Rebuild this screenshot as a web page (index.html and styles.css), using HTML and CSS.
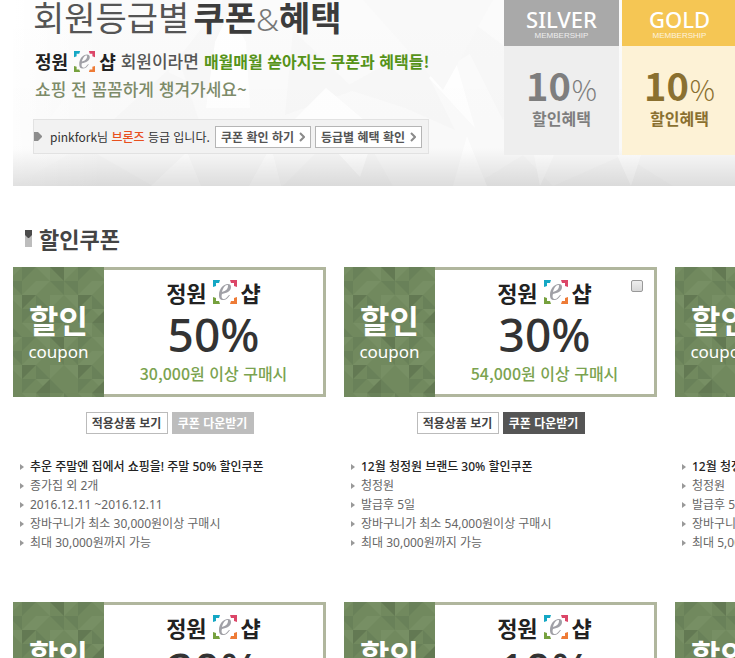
FILE: index.html
```html
<!DOCTYPE html>
<html lang="ko">
<head>
    <meta charset="UTF-8">
    <meta name="viewport" content="width=device-width, initial-scale=1.0">
    <title>정원e샵 쿠폰&amp;혜택</title>
    <link rel="stylesheet" href="styles.css">
</head>
<body>
    <!-- shared shapes -->
    <svg class="defs" width="0" height="0" aria-hidden="true">
        <defs>
            <pattern id="facets" width="56" height="70" patternUnits="userSpaceOnUse" patternTransform="translate(-5 0)">
                <rect width="56" height="70" fill="#71895e"/>
                <path fill="#698159" d="M0 14h14v14zM14 0h14l-14 14zM42 14l14 14V14zM28 28l14 14H28zM14 42h14L14 56zM42 42l14 14H42zM28 56h14v14zM0 56l14 14H0z"/>
                <path fill="#778f64" d="M0 0h14L0 14zM28 14h14L28 28zM28 0l14 14V0zM0 28h14v14zM14 28l14-14v14zM42 28h14L42 42zM28 42h14v14zM14 56h14v14zM42 70l14-14v14z"/>
                <path fill="#637953" d="M42 0h14v14zM14 28h14L14 42zM28 56l14-14v14z"/>
            </pattern>
            <symbol id="e-mark" viewBox="0 0 24 24">
                <path fill="#14a7c4" d="M0 0h7L6 3H3v3L0 7z"/>
                <path fill="#dc4668" d="M17 0h7v7l-3-1V3h-3z"/>
                <path fill="#76a13e" d="M0 17l3 1v3h3l1 3H0z"/>
                <path fill="#ee7b36" d="M24 17v7h-7l1-3h3v-3z"/>
                <path fill="#a0a0a6" fill-rule="evenodd" d="M17 15c-2 3-4 5-7 5-3 0-4-2-4-5 0-6 4-11 9-11 2 0 3 1 3 3 0 4-4 6-9 7-1 3 0 5 2 5s3-2 5-4zM9 12c4-1 6-3 6-6 0-1 0-1-1-1-2 0-4 3-5 7z"/>
            </symbol>
            <symbol id="chevron" viewBox="0 0 6 10">
                <path fill="none" stroke="#8a8a8a" stroke-width="2" d="M1 1l4 4-4 4"/>
            </symbol>
        </defs>
    </svg>

    <div class="page">
        <div class="banner">
            <svg class="banner-bg" viewBox="0 0 722 186" preserveAspectRatio="none" aria-hidden="true">
                <defs>
                    <linearGradient id="fade" x1="0" y1="0" x2="0" y2="1">
                        <stop offset="0" stop-color="#000" stop-opacity="0"/>
                        <stop offset="0.8" stop-color="#000" stop-opacity="0.01"/>
                        <stop offset="1" stop-color="#000" stop-opacity="0.12"/>
                    </linearGradient>
                    <linearGradient id="edge">
                        <stop offset="0" stop-color="#fff"/>
                        <stop offset="1" stop-color="#fff" stop-opacity="0"/>
                    </linearGradient>
                </defs>
                <rect width="722" height="186" fill="#fbfbfb"/>
                <path fill="#f8f8f8" d="M210 0l-55 72 42 20 28-92zM280 30l62 60-70 25zM330 88l72-40 40 82-50-22zM400 44l80-4-66 40zM430 0l80 60-20 60zM100 120l66-60 20 60zM0 186l70-40 70 40zM270 186l70-70 40 70zM510 155l-50 31h80zM610 155l-70 31h120z"/>
                <path fill="#fff" d="M202 42l14-30 17 30 4 66h-44zM313 88l38 32h-70zM440 52l22 76-46-50zM138 186l36-34 14 34zM236 186l22-40 10 40zM325 153l30 0-8 24zM440 186l14-50 20 50zM521 155h20l-14 31zM604 155h24l-10 31z"/>
                <path fill="#f9f9f9" d="M350 0l80 90 50-90zM0 60l60 26-50 70z"/>
                <rect width="90" height="186" fill="url(#edge)"/>
                <rect width="722" height="186" fill="url(#fade)"/>
            </svg>
            <div class="intro">
                <h1 class="title"><span>회원등급별</span> <span><strong>쿠폰</strong><span class="amp">&amp;</span><strong>혜택</strong></span></h1>
                <p class="lead">
                    <span class="logo logo-small">정원<svg><use href="#e-mark"/></svg>샵</span>
                    <span class="who">회원이라면</span>
                    <strong class="green">매월매월 쏟아지는 쿠폰과 혜택들!</strong>
                </p>
                <p class="lead olive">쇼핑 전 꼼꼼하게 챙겨가세요~</p>
                <div class="grade">
                    <svg class="grade-mark" width="8" height="9" viewBox="0 0 8 9"><path fill="#8d8d8d" d="M0 0h4l4 4v1L4 9H0z"/></svg>
                    <p class="grade-text">pinkfork님 <em>브론즈</em> 등급 입니다.</p>
                    <a class="grade-link" href="#coupons">쿠폰 확인 하기<svg><use href="#chevron"/></svg></a>
                    <a class="grade-link" href="#tiers">등급별 혜택 확인<svg><use href="#chevron"/></svg></a>
                </div>
            </div>
            <div class="tiers" id="tiers">
                <div class="tier silver">
                    <div class="tier-head"><strong>SILVER</strong><small>MEMBERSHIP</small></div>
                    <div class="tier-body"><p class="rate"><strong>10</strong><span>%</span></p><p class="benefit">할인혜택</p></div>
                </div>
                <div class="tier gold">
                    <div class="tier-head"><strong>GOLD</strong><small>MEMBERSHIP</small></div>
                    <div class="tier-body"><p class="rate"><strong>10</strong><span>%</span></p><p class="benefit">할인혜택</p></div>
                </div>
            </div>
        </div>

        <h2 class="section-title">
            <svg width="7" height="17" viewBox="0 0 7 17" aria-hidden="true"><path fill="#bdbdbd" d="M0 0h7v17H0z"/><path fill="#4b4b4b" d="M0 0h7v5L4 8H3L0 5z"/></svg>
            할인쿠폰
        </h2>

        <div class="coupons" id="coupons">
            <div class="coupon">
                <div class="card">
                    <div class="card-side">
                        <svg class="card-pattern" aria-hidden="true"><rect width="100%" height="100%" fill="url(#facets)"/></svg>
                        <strong>할인</strong><span>coupon</span>
                    </div>
                    <div class="card-main">
                        <span class="logo">정원<svg><use href="#e-mark"/></svg>샵</span>
                        <p class="percent">50%</p>
                        <p class="condition">30,000원 이상 구매시</p>
                    </div>
                </div>
                <div class="actions">
                    <button type="button" class="btn">적용상품 보기</button>
                    <button type="button" class="btn btn-off">쿠폰 다운받기</button>
                </div>
                <ul class="details">
                    <li class="name">추운 주말엔 집에서 쇼핑을! 주말 50% 할인쿠폰</li>
                    <li>종가집 외 2개</li>
                    <li>2016.12.11 ~2016.12.11</li>
                    <li>장바구니가 최소 30,000원이상 구매시</li>
                    <li>최대 30,000원까지 가능</li>
                </ul>
            </div>

            <div class="coupon">
                <div class="card">
                    <div class="card-side">
                        <svg class="card-pattern" aria-hidden="true"><rect width="100%" height="100%" fill="url(#facets)"/></svg>
                        <strong>할인</strong><span>coupon</span>
                    </div>
                    <div class="card-main">
                        <span class="logo">정원<svg><use href="#e-mark"/></svg>샵</span>
                        <p class="percent">30%</p>
                        <p class="condition">54,000원 이상 구매시</p>
                    </div>
                    <input class="card-check" type="checkbox" aria-label="쿠폰 선택">
                </div>
                <div class="actions">
                    <button type="button" class="btn">적용상품 보기</button>
                    <button type="button" class="btn btn-dark">쿠폰 다운받기</button>
                </div>
                <ul class="details">
                    <li class="name">12월 청정원 브랜드 30% 할인쿠폰</li>
                    <li>청정원</li>
                    <li>발급후 5일</li>
                    <li>장바구니가 최소 54,000원이상 구매시</li>
                    <li>최대 30,000원까지 가능</li>
                </ul>
            </div>

            <div class="coupon">
                <div class="card">
                    <div class="card-side">
                        <svg class="card-pattern" aria-hidden="true"><rect width="100%" height="100%" fill="url(#facets)"/></svg>
                        <strong>할인</strong><span>coupon</span>
                    </div>
                    <div class="card-main"></div>
                </div>
                <div class="actions"></div>
                <ul class="details">
                    <li class="name">12월 청정원</li>
                    <li>청정원</li>
                    <li>발급후 5일</li>
                    <li>장바구니가</li>
                    <li>최대 5,000원</li>
                </ul>
            </div>

            <div class="coupon">
                <div class="card">
                    <div class="card-side">
                        <svg class="card-pattern" aria-hidden="true"><rect width="100%" height="100%" fill="url(#facets)"/></svg>
                        <strong>할인</strong><span>coupon</span>
                    </div>
                    <div class="card-main">
                        <span class="logo">정원<svg><use href="#e-mark"/></svg>샵</span>
                        <p class="percent">20%</p>
                    </div>
                </div>
            </div>

            <div class="coupon">
                <div class="card">
                    <div class="card-side">
                        <svg class="card-pattern" aria-hidden="true"><rect width="100%" height="100%" fill="url(#facets)"/></svg>
                        <strong>할인</strong><span>coupon</span>
                    </div>
                    <div class="card-main">
                        <span class="logo">정원<svg><use href="#e-mark"/></svg>샵</span>
                        <p class="percent">10%</p>
                    </div>
                </div>
            </div>

            <div class="coupon">
                <div class="card">
                    <div class="card-side">
                        <svg class="card-pattern" aria-hidden="true"><rect width="100%" height="100%" fill="url(#facets)"/></svg>
                        <strong>할인</strong><span>coupon</span>
                    </div>
                    <div class="card-main"></div>
                </div>
            </div>
        </div>
    </div>
</body>
</html>
```

FILE: styles.css
```css
* {
    box-sizing: border-box;
}

body {
    margin: 0;
    height: 100vh;
    overflow: hidden;
    background: #fff;
    color: #333;
    font-family: "Noto Sans", "Noto Sans CJK KR", sans-serif;
    font-size: 12px;
}

h1, h2, p, ul {
    margin: 0;
    padding: 0;
}

.defs {
    position: absolute;
}

.page {
    padding-left: 13px;
}

/* banner */

.banner {
    position: relative;
    display: flex;
    height: 186px;
}

.banner-bg {
    position: absolute;
    width: 100%;
    height: 100%;
}

.intro {
    position: relative;
    width: 471px;
    flex-shrink: 0;
    margin-left: 20px;
}

.title {
    display: flex;
    gap: 4px;
    height: 47px;
    font-family: "Noto Sans CJK KR", sans-serif;
    font-size: 34px;
    line-height: 34px;
    font-weight: 400;
    color: #555;
    white-space: nowrap;
}

.title strong {
    font-weight: 700;
    color: #3c3c3c;
}

.amp {
    font-family: "Noto Sans", sans-serif;
    font-size: 32px;
    font-weight: 300;
    color: #777;
}

.lead {
    display: flex;
    align-items: center;
    gap: 5px;
    padding-left: 2px;
    font-family: "Noto Sans CJK KR", sans-serif;
    font-size: 17px;
    line-height: 28px;
    font-weight: 500;
    white-space: nowrap;
}

.who {
    color: #555;
}

.green {
    color: #569319;
    font-size: 16px;
}

.olive {
    color: #7d8b69;
}

.logo {
    display: inline-flex;
    align-items: center;
    font-family: "Noto Sans CJK KR", sans-serif;
    font-size: 22px;
    line-height: 30px;
    font-weight: 700;
    color: #222;
}

.logo svg {
    width: 24px;
    height: 24px;
    margin: 0 4px 0 6px;
}

.logo-small {
    font-size: 18px;
    line-height: 28px;
}

.logo-small svg {
    width: 21px;
    height: 21px;
}

.grade {
    display: flex;
    align-items: center;
    gap: 4px;
    width: 396px;
    height: 35px;
    margin-top: 16px;
    border: 1px solid #e2e2e2;
    background: #f2f2f2;
    padding-right: 6px;
}

.grade-mark {
    flex-shrink: 0;
}

.grade-text {
    flex-grow: 1;
    margin-left: 4px;
    font-family: "Noto Sans CJK KR", sans-serif;
    white-space: nowrap;
}

.grade-text em {
    font-style: normal;
    font-weight: 500;
    color: #e8501e;
}

.grade-link {
    display: flex;
    align-items: center;
    gap: 5px;
    height: 22px;
    padding: 0 5px;
    border: 1px solid #b5b5b5;
    background: #fff;
    color: #555;
    font-family: "Noto Sans CJK KR", sans-serif;
    font-weight: 700;
    text-decoration: none;
    white-space: nowrap;
}

.grade-link svg {
    width: 6px;
    height: 10px;
}

.tiers {
    position: relative;
    display: flex;
    gap: 3px;
}

.tier {
    width: 115px;
    height: 155px;
    text-align: center;
}

.tier-head {
    display: flex;
    flex-direction: column;
    height: 46px;
    padding-top: 7px;
    color: #fff;
}

.tier-head strong {
    font-size: 22px;
    line-height: 25px;
    font-weight: 500;
}

.tier-head small {
    font-family: "Liberation Sans", sans-serif;
    font-size: 8px;
    line-height: 8px;
    opacity: 0.8;
}

.tier-body {
    padding-top: 19px;
    font-family: "Noto Sans CJK KR", sans-serif;
}

.rate {
    display: flex;
    justify-content: center;
    align-items: baseline;
    gap: 1px;
    line-height: 40px;
}

.rate strong {
    font-size: 38px;
}

.rate span {
    font-size: 28px;
    font-weight: 300;
}

.benefit {
    font-size: 16px;
    line-height: 18px;
    font-weight: 700;
}

.silver {
    background: #eee;
    color: #7e7e7e;
}

.silver .tier-head {
    background: #a9a9a9;
}

.gold {
    background: #fdf2d6;
    color: #8a7030;
}

.gold .tier-head {
    background: #f5c654;
}

/* coupon list */

.section-title {
    display: flex;
    align-items: center;
    gap: 7px;
    height: 34px;
    margin: 35px 0 12px;
    padding-left: 12px;
    font-family: "Noto Sans CJK KR", sans-serif;
    font-size: 22px;
    font-weight: 700;
    color: #444;
}

.coupons {
    display: grid;
    grid-template-columns: repeat(3, 313px);
    gap: 50px 18px;
}

.card {
    position: relative;
    display: flex;
    height: 130px;
}

.card-side {
    position: relative;
    display: flex;
    flex-direction: column;
    align-items: center;
    width: 91px;
    padding-top: 31px;
    color: #fff;
}

.card-pattern {
    position: absolute;
    top: 0;
    left: 0;
    width: 100%;
    height: 100%;
}

.card-side strong {
    position: relative;
    font-family: "Noto Sans CJK KR", sans-serif;
    font-size: 32px;
    line-height: 42px;
}

.card-side span {
    position: relative;
    font-size: 17px;
    line-height: 24px;
}

.card-main {
    display: flex;
    flex-direction: column;
    align-items: center;
    flex-grow: 1;
    padding-top: 7px;
    border: 3px solid #b0b69d;
    border-left: none;
}

.percent {
    font-size: 46px;
    line-height: 54px;
    font-weight: 500;
    color: #333;
}

.condition {
    font-family: "Noto Sans CJK KR", sans-serif;
    font-size: 16px;
    line-height: 24px;
    font-weight: 500;
    color: #7ba350;
}

.card-check {
    position: absolute;
    top: 13px;
    right: 14px;
    width: 12px;
    height: 12px;
    margin: 0;
    appearance: none;
    border: 1px solid #999;
    border-radius: 2px;
    background: linear-gradient(#eee, #d8d8d8);
}

.actions {
    display: flex;
    justify-content: center;
    gap: 4px;
    height: 22px;
    margin: 15px 0 23px;
}

.btn {
    width: 82px;
    padding: 0;
    border: 1px solid #bbb;
    background: #fff;
    color: #444;
    font-family: "Noto Sans CJK KR", sans-serif;
    font-size: 12px;
    line-height: 20px;
    font-weight: 700;
    white-space: nowrap;
}

.btn-off {
    border-color: #bdbdbd;
    background: #bdbdbd;
    color: #fff;
}

.btn-dark {
    border-color: #555;
    background: #555;
    color: #fff;
}

.details {
    list-style: none;
    padding-left: 7px;
    color: #666;
}

.details li {
    display: flex;
    align-items: center;
    gap: 6px;
    line-height: 19px;
    white-space: nowrap;
}

.details li::before {
    content: "";
    border: 3px solid transparent;
    border-left: 4px solid #999;
    border-right: none;
}

.details .name {
    font-weight: 500;
    color: #222;
}
```
